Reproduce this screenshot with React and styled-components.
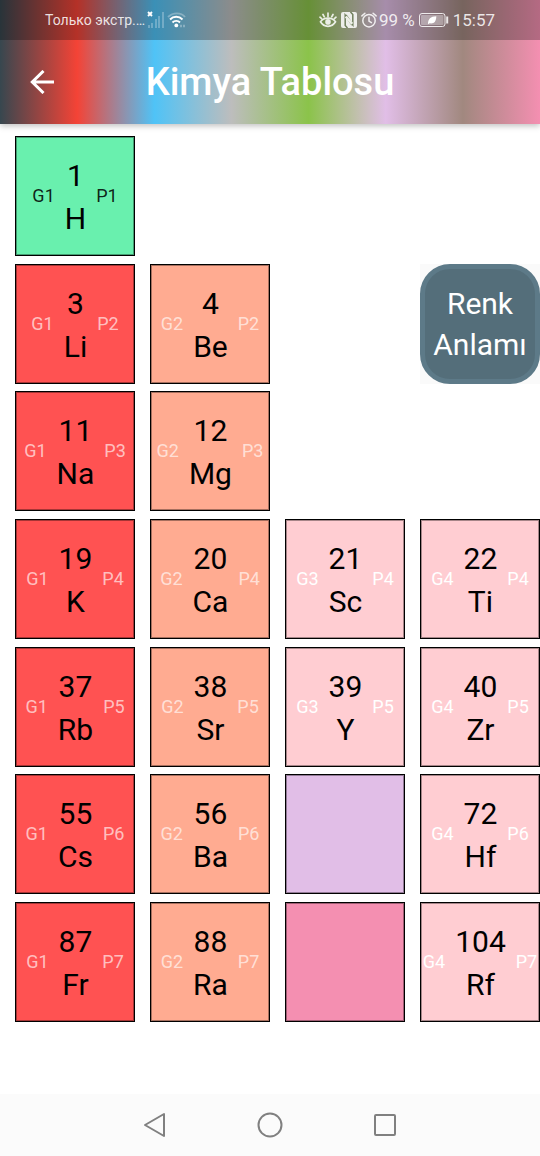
import React from "react";
import styled, { createGlobalStyle } from "styled-components";

const GlobalStyle = createGlobalStyle`
  *, *::before, *::after { box-sizing: border-box; }
  body {
    margin: 0;
    background: #fff;
    font-family: Roboto, "Noto Sans", sans-serif;
  }
`;

const Screen = styled.div`
  min-height: 100vh;
  display: flex;
  flex-direction: column;
`;

const Header = styled.header`
  background: linear-gradient(
    90deg,
    #37474f,
    #f44336,
    #4fc3f7,
    #bdbdbd,
    #8bc34a,
    #e1bee7,
    #a1887f,
    #f48fb1
  );
  box-shadow: 0 2px 6px rgba(0, 0, 0, 0.25);
`;

const StatusBar = styled.div`
  display: flex;
  align-items: center;
  justify-content: space-between;
  height: 40px;
  padding: 0 45px;
  background: rgba(0, 0, 0, 0.26);
  color: rgba(255, 255, 255, 0.85);
`;

const StatusGroup = styled.div`
  display: flex;
  align-items: center;
  gap: ${(p) => p.$gap}px;
`;

const Carrier = styled.span`
  font-size: 14px;
  line-height: 20px;
`;

const StatusText = styled.span`
  font-size: 17px;
  line-height: 20px;
  white-space: nowrap;
`;

const AppBar = styled.div`
  display: grid;
  grid-template-columns: 84px 1fr 84px;
  align-items: center;
  height: 84px;
`;

const BackButton = styled.button`
  display: flex;
  align-items: center;
  justify-content: center;
  height: 84px;
  padding: 0;
  border: 0;
  background: none;
  color: #fff;
`;

const Title = styled.h1`
  margin: 0;
  color: #fff;
  font-size: 38px;
  line-height: 44px;
  font-weight: 500;
  text-align: center;
  white-space: nowrap;
`;

const Board = styled.main`
  flex: 1;
  display: grid;
  grid-template-columns: repeat(4, minmax(0, 1fr));
  grid-auto-rows: 120px;
  column-gap: 15px;
  row-gap: 7px;
  align-content: space-between;
  padding: 12px 0 72px 15px;
`;

const CELL_COLORS = {
  nonmetal: "#69f0ae",
  alkali: "#ff5252",
  alkaline: "#ffab91",
  transition: "#ffcdd2",
  lanthanide: "#e1bee7",
  actinide: "#f48fb1",
};

const NOTE_COLORS = {
  nonmetal: "rgba(0, 0, 0, 0.87)",
  alkali: "rgba(255, 255, 255, 0.65)",
  alkaline: "rgba(255, 255, 255, 0.65)",
  transition: "#fff",
};

const Cell = styled.div`
  grid-column: ${(p) => p.$group};
  grid-row: ${(p) => p.$period};
  display: flex;
  align-items: center;
  justify-content: center;
  gap: 10px;
  border: 1px solid #000;
  box-shadow: inset 0 0 0 1px rgba(0, 0, 0, 0.35);
  background: ${(p) => CELL_COLORS[p.$kind]};
`;

const Note = styled.span`
  color: ${(p) => NOTE_COLORS[p.$kind]};
  font-size: 18px;
  line-height: 24px;
`;

const Symbol = styled.div`
  display: flex;
  flex-direction: column;
  align-items: center;
  padding-top: 2px;
  color: #000;
  font-size: 30px;
  line-height: 43px;
`;

const LegendSlot = styled.div`
  grid-column: 4;
  grid-row: 2;
  display: flex;
  background: #fafafa;
`;

const LegendButton = styled.button`
  flex: 1;
  padding: 0;
  border: 5px solid #5d7a88;
  border-radius: 30px;
  background: #546e7a;
  color: #fff;
  font-family: inherit;
  font-size: 30px;
  line-height: 41px;
`;

const NavBar = styled.nav`
  display: grid;
  grid-template-columns: repeat(3, 1fr);
  height: 62px;
  padding: 0 18%;
  background: #fbfbfb;
`;

const NavButton = styled.button`
  display: flex;
  align-items: center;
  justify-content: center;
  padding: 0;
  border: 0;
  background: none;
  color: #808080;
`;

const ELEMENTS = [
  { n: 1, s: "H", g: 1, p: 1, kind: "nonmetal" },
  { n: 3, s: "Li", g: 1, p: 2, kind: "alkali" },
  { n: 4, s: "Be", g: 2, p: 2, kind: "alkaline" },
  { n: 11, s: "Na", g: 1, p: 3, kind: "alkali" },
  { n: 12, s: "Mg", g: 2, p: 3, kind: "alkaline" },
  { n: 19, s: "K", g: 1, p: 4, kind: "alkali" },
  { n: 20, s: "Ca", g: 2, p: 4, kind: "alkaline" },
  { n: 21, s: "Sc", g: 3, p: 4, kind: "transition" },
  { n: 22, s: "Ti", g: 4, p: 4, kind: "transition" },
  { n: 37, s: "Rb", g: 1, p: 5, kind: "alkali" },
  { n: 38, s: "Sr", g: 2, p: 5, kind: "alkaline" },
  { n: 39, s: "Y", g: 3, p: 5, kind: "transition" },
  { n: 40, s: "Zr", g: 4, p: 5, kind: "transition" },
  { n: 55, s: "Cs", g: 1, p: 6, kind: "alkali" },
  { n: 56, s: "Ba", g: 2, p: 6, kind: "alkaline" },
  { n: 72, s: "Hf", g: 4, p: 6, kind: "transition" },
  { n: 87, s: "Fr", g: 1, p: 7, kind: "alkali" },
  { n: 88, s: "Ra", g: 2, p: 7, kind: "alkaline" },
  { n: 104, s: "Rf", g: 4, p: 7, kind: "transition" },
];

function ElementCell({ n, s, g, p, kind }) {
  return (
    <Cell $group={g} $period={p} $kind={kind}>
      <Note $kind={kind}>G{g}</Note>
      <Symbol>
        <span>{n}</span>
        <span>{s}</span>
      </Symbol>
      <Note $kind={kind}>P{p}</Note>
    </Cell>
  );
}

const SignalIcon = () => (
  <svg width="18" height="18" viewBox="0 0 18 18" fill="currentColor" aria-hidden="true">
    <path d="M1 1l4 4M5 1L1 5" stroke="#fff" strokeWidth="1.9" />
    <g opacity="0.3">
      <rect x="1" y="14" width="2" height="3" />
      <rect x="4" y="12" width="2" height="5" />
      <rect x="8" y="8" width="2" height="9" />
      <rect x="11" y="5" width="2" height="12" />
      <rect x="15" y="1" width="2" height="16" />
    </g>
  </svg>
);

const WifiIcon = () => (
  <svg width="20" height="16" viewBox="0 0 20 16" fill="none" stroke="currentColor" strokeWidth="1.9" aria-hidden="true">
    <path d="M1 5C6 0.200 14 0.200 18 5" opacity="0.35" />
    <path d="M3 7.500C6.500 3.800 12 3.800 15.500 7.500" stroke="#fff" />
    <path d="M5.500 10.500C7.600 8.300 11 8.300 13 10.500" stroke="#fff" />
    <circle cx="9.300" cy="13.400" r="1.900" fill="#fff" stroke="none" />
    <path d="M13 14h2M16 14h2" strokeWidth="2.500" opacity="0.35" />
  </svg>
);

const EyeIcon = () => (
  <svg width="18" height="16" viewBox="0 0 18 16" fill="none" stroke="currentColor" strokeWidth="1.700" strokeLinecap="round" aria-hidden="true">
    <path d="M1.500 9.800C5 5 13 5 16.500 9.800C13 15.800 5 15.800 1.500 9.800Z" />
    <circle cx="9" cy="9.900" r="2.800" fill="currentColor" stroke="none" />
    <path d="M9 1v3.500M4 2.500l1.300 2.300M14 2.500l-1.300 2.300M1 5.200l1.600 1.400M17 5.200l-1.600 1.400" />
  </svg>
);

const NfcIcon = () => (
  <svg width="16" height="16" viewBox="0 0 16 16" aria-hidden="true">
    <rect width="16" height="16" rx="2" fill="currentColor" />
    <g fill="none" stroke="#6f7f5c" strokeWidth="1.5">
      <path d="M6.500 16L4.200 13.500V3.200L11 13" />
      <path d="M9.500 0L11.800 2.500V12.800L5 3" />
    </g>
    <path d="M4.800 4.500L11.200 11.800" stroke="#eef0e8" strokeWidth="2.6" />
  </svg>
);

const AlarmIcon = () => (
  <svg width="16" height="16" viewBox="0 0 16 16" fill="none" stroke="currentColor" strokeWidth="1.500" strokeLinecap="round" aria-hidden="true">
    <circle cx="8" cy="8.700" r="6.200" />
    <path d="M8 5.200v3.800l2.400 1.600M0.900 3.900L3.900 1.200M15.100 3.900L12.100 1.200" />
  </svg>
);

const BatteryIcon = () => (
  <svg width="30" height="14" viewBox="0 0 30 14" fill="none" aria-hidden="true">
    <rect x="0.500" y="0.500" width="25.500" height="13" rx="2.500" stroke="currentColor" />
    <rect x="2" y="2" width="22.500" height="10" rx="1" fill="currentColor" opacity="0.4" />
    <path d="M9 11.200C9 6 11.500 3.300 17.300 3.200C17.300 8.500 15 11 10.600 10.300Z" fill="#fff" />
    <path d="M28.200 3.500v7" stroke="currentColor" strokeWidth="2" />
  </svg>
);

const BackArrow = () => (
  <svg width="24" height="24" viewBox="0 0 24 24" fill="none" stroke="currentColor" strokeWidth="3" aria-hidden="true">
    <path d="M13.500 1L2.300 12L13.500 23M2.500 12H24" />
  </svg>
);

export default function App() {
  return (
    <>
      <GlobalStyle />
      <Screen>
        <Header>
          <StatusBar>
            <StatusGroup $gap={2}>
              <Carrier>Только экстр.…</Carrier>
              <SignalIcon />
              <WifiIcon />
            </StatusGroup>
            <StatusGroup $gap={4}>
              <EyeIcon />
              <NfcIcon />
              <StatusGroup $gap={2}>
                <AlarmIcon />
                <StatusText>99 %</StatusText>
              </StatusGroup>
              <BatteryIcon />
              <StatusText>15:57</StatusText>
            </StatusGroup>
          </StatusBar>
          <AppBar>
            <BackButton type="button" aria-label="Geri">
              <BackArrow />
            </BackButton>
            <Title>Kimya Tablosu</Title>
          </AppBar>
        </Header>

        <Board>
          {ELEMENTS.map((el) => (
            <ElementCell key={el.n} {...el} />
          ))}
          <Cell $group={3} $period={6} $kind="lanthanide" />
          <Cell $group={3} $period={7} $kind="actinide" />
          <LegendSlot>
            <LegendButton type="button">
              Renk
              <br />
              Anlamı
            </LegendButton>
          </LegendSlot>
        </Board>

        <NavBar>
          <NavButton type="button" aria-label="Geri">
            <svg width="24" height="26" viewBox="0 0 24 26" fill="none" stroke="currentColor" strokeWidth="2" strokeLinejoin="round">
              <path d="M21 2V24L2 13Z" />
            </svg>
          </NavButton>
          <NavButton type="button" aria-label="Ana ekran">
            <svg width="26" height="26" viewBox="0 0 26 26" fill="none" stroke="currentColor" strokeWidth="2">
              <circle cx="13" cy="13" r="11.500" />
            </svg>
          </NavButton>
          <NavButton type="button" aria-label="Son uygulamalar">
            <svg width="24" height="24" viewBox="0 0 24 24" fill="none" stroke="currentColor" strokeWidth="2">
              <rect x="2" y="2" width="20" height="20" rx="1" />
            </svg>
          </NavButton>
        </NavBar>
      </Screen>
    </>
  );
}
